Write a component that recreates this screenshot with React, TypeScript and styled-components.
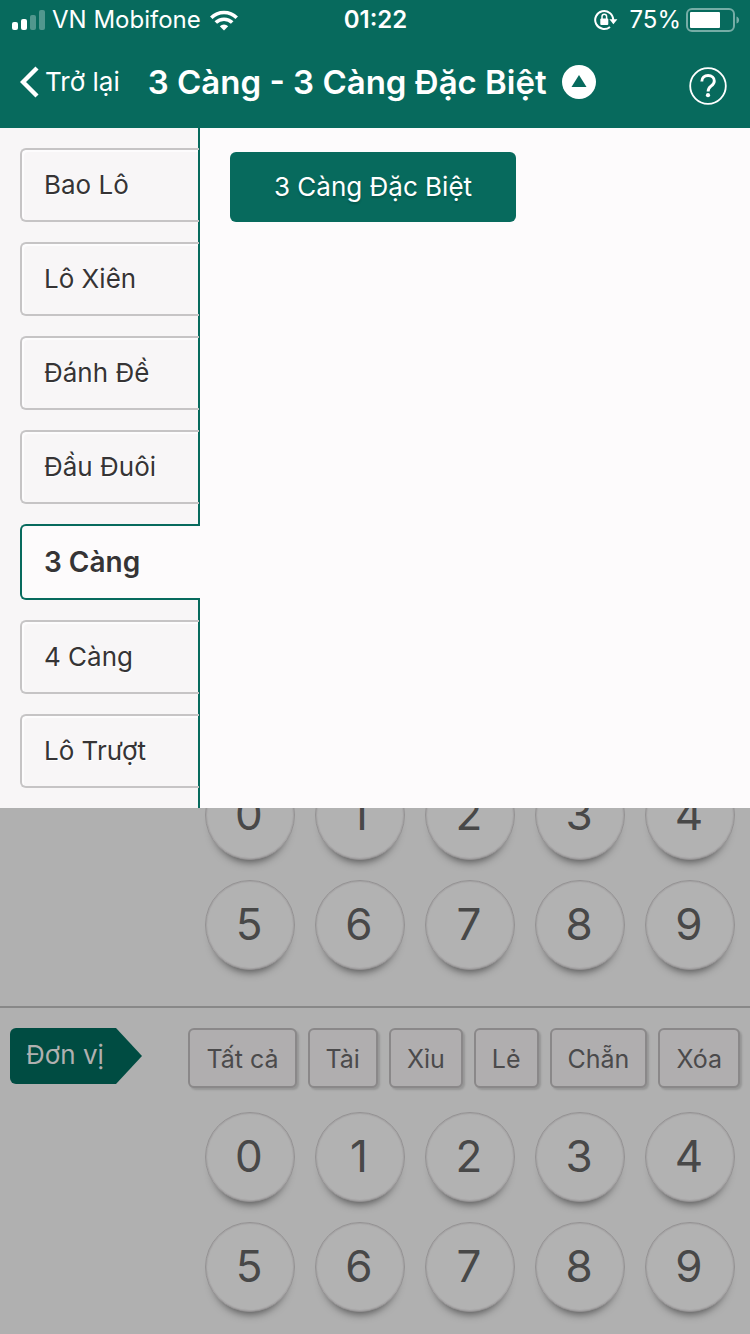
import React, { useState } from "react";
import styled, { createGlobalStyle } from "styled-components";

const green = "#076a5d";

const GlobalStyle = createGlobalStyle`
  *, *::before, *::after { box-sizing: border-box; }
  body {
    margin: 0;
    background: #b0b0b0;
    font-family: Inter, "Liberation Sans", sans-serif;
  }
  button { font-family: inherit; cursor: pointer; }
`;

const Page = styled.div`
  min-height: 100vh;
  display: flex;
  flex-direction: column;
`;

const Header = styled.header`
  background: ${green};
  color: #fff;
`;

const StatusBar = styled.div`
  display: grid;
  grid-template-columns: 1fr auto 1fr;
  align-items: center;
  height: 40px;
  padding: 0 10px 0 11px;
  font-size: 24px;
  line-height: 28px;
`;

const StatusGroup = styled.div<{ $end?: boolean }>`
  display: flex;
  align-items: center;
  justify-content: ${(p) => (p.$end ? "flex-end" : "flex-start")};
  gap: ${(p) => (p.$end ? 5 : 7)}px;
`;

const Carrier = styled.span`
  margin-right: 2px;
`;

const Clock = styled.time`
  font-weight: 600;
`;

const Charge = styled.span`
  margin-left: 6px;
`;

const NavBar = styled.nav`
  display: flex;
  align-items: center;
  height: 88px;
  padding: 0 23px 4px 20px;
`;

const BackLink = styled.a`
  display: flex;
  align-items: center;
  gap: 6px;
  color: #fff;
  font-size: 26px;
  line-height: 32px;
  text-decoration: none;
`;

const TitleButton = styled.button`
  display: flex;
  align-items: center;
  gap: 15px;
  margin-left: 28px;
  padding: 0;
  border: 0;
  background: none;
  color: #fff;
  font-size: 33px;
  line-height: 40px;
  font-weight: 600;
  white-space: nowrap;
`;

const HelpButton = styled.button`
  display: flex;
  margin: 8px 0 0 auto;
  padding: 0;
  border: 0;
  background: none;
`;

const Menu = styled.section`
  position: relative;
  z-index: 1;
  display: flex;
  background: #fdfbfc;
`;

const Sidebar = styled.div`
  flex: 0 0 200px;
  display: flex;
  flex-direction: column;
  gap: 20px;
  padding: 20px 0 20px 20px;
  background: #f8f6f7;
  box-shadow: inset -2px 0 ${green};
`;

const Tab = styled.button<{ $active: boolean }>`
  height: ${(p) => (p.$active ? 76 : 74)}px;
  margin-right: ${(p) => (p.$active ? 0 : 1)}px;
  padding: 0 0 0 22px;
  border: 2px solid ${(p) => (p.$active ? green : "#c6c4c5")};
  border-right: 0;
  border-radius: 6px 0 0 6px;
  background: ${(p) => (p.$active ? "#fdfbfc" : "#f8f6f7")};
  background-clip: padding-box;
  box-shadow: ${(p) => (p.$active ? "none" : `inset -1px 0 ${green}, inset 2px 2px #fdfcfd`)};
  color: #363435;
  font-size: ${(p) => (p.$active ? 28 : 26)}px;
  line-height: 32px;
  font-weight: ${(p) => (p.$active ? 600 : 400)};
  text-align: left;
  text-shadow: 1px 1px #fff;
`;

const Options = styled.div`
  flex: 1;
  display: flex;
  flex-wrap: wrap;
  align-content: flex-start;
  gap: 20px;
  padding: 24px 30px;
`;

const Option = styled.button`
  height: 70px;
  padding: 0 44px;
  border: 0;
  border-radius: 6px;
  background: ${green};
  color: #fff;
  font-size: 26px;
  line-height: 32px;
  text-shadow: 0 2px 2px rgba(0, 0, 0, 0.2);
`;

/* The board slides under the open menu, which hides the top of its first keys. */
const Board = styled.main`
  margin-top: -38px;
`;

const Position = styled.section`
  padding-bottom: 22px;

  & + & {
    border-top: 2px solid #888;
    margin-top: 14px;
    padding-top: 20px;
  }
`;

const PositionHead = styled.div`
  display: flex;
  justify-content: space-between;
  align-items: flex-start;
  padding: 0 10px;
  margin-bottom: 24px;
`;

const Label = styled.h2`
  display: flex;
  align-items: center;
  width: 132px;
  height: 56px;
  margin: 0;
  padding: 0 0 2px 16px;
  border-radius: 6px 0 0 6px;
  background: #004c42;
  clip-path: polygon(0 0, 106px 0, 100% 50%, 106px 100%, 0 100%);
  color: #b0b0b0;
  font-size: 26px;
  line-height: 32px;
  font-weight: 400;
`;

const QuickPicks = styled.div`
  display: flex;
  gap: 11px;
`;

const QuickPick = styled.button`
  height: 60px;
  padding: 2px 16px 0;
  border: 2px solid #8a8889;
  border-radius: 6px;
  background: #b0aeaf;
  box-shadow: 2px 2px 2px rgba(0, 0, 0, 0.15);
  color: #4b4a4b;
  font-size: 25px;
  line-height: 32px;
`;

const Keys = styled.div`
  display: grid;
  grid-template-columns: repeat(5, 90px);
  justify-content: end;
  gap: 20px;
  padding-right: 15px;
`;

const Key = styled.button`
  height: 90px;
  padding: 0 2px 2px 0;
  border: 1px solid #949293;
  border-radius: 50%;
  background: #b2b2b2;
  box-shadow: inset 0 0 1px 1px #a4a2a3, 0 10px 8px -8px rgba(0, 0, 0, 0.55);
  color: #484848;
  font-size: 44px;
  line-height: 52px;
`;

const tabs = ["Bao Lô", "Lô Xiên", "Đánh Đề", "Đầu Đuôi", "3 Càng", "4 Càng", "Lô Trượt"];
const quickPicks = ["Tất cả", "Tài", "Xỉu", "Lẻ", "Chẵn", "Xóa"];
const digits = [0, 1, 2, 3, 4, 5, 6, 7, 8, 9];

const SignalIcon = () => (
  <svg width="34" height="22" viewBox="0 0 34 22" fill="#fff" aria-hidden="true">
    <rect x="1" y="13" width="6" height="8" rx="2" />
    <rect x="10" y="10" width="6" height="11" rx="2" />
    <rect x="19" y="6" width="6" height="15" rx="2" opacity="0.3" />
    <rect x="28" y="1" width="6" height="20" rx="2" opacity="0.3" />
  </svg>
);

const WifiIcon = () => (
  <svg width="28" height="21" viewBox="0 0 28 21" fill="none" stroke="#fff" strokeWidth="3.6" aria-hidden="true">
    <path d="M1.3 7.8a18 18 0 0 1 25.4 0" />
    <path d="M5.8 12.6a11.6 11.6 0 0 1 16.4 0" />
    <path d="M14 20.5l-4.2-4.3a6 6 0 0 1 8.4 0z" fill="#fff" stroke="none" />
  </svg>
);

const RotationLockIcon = () => (
  <svg width="24" height="22" viewBox="0 0 24 22" fill="none" aria-hidden="true">
    <path d="M19.2 11A9 9 0 1 0 16 17.9" stroke="#fff" strokeWidth="2" />
    <path d="M15.4 10.2h8l-4 5z" fill="#fff" />
    <rect x="6.3" y="9.6" width="8" height="6.4" rx="1" fill="#fff" />
    <path d="M8 10V7.600a2.300 2.300 0 0 1 4.600 0V10" stroke="#fff" strokeWidth="1.500" />
  </svg>
);

const BatteryIcon = () => (
  <svg width="54" height="24" viewBox="0 0 54 24" fill="none" aria-hidden="true">
    <rect x="1" y="1" width="47" height="22" rx="5" stroke="#fff" strokeOpacity="0.45" strokeWidth="2" />
    <rect x="4" y="4" width="30" height="16" rx="1" fill="#fff" />
    <path d="M50.500 8.500c3.500 1 3.500 6 0 7z" fill="#fff" fillOpacity="0.45" />
  </svg>
);

const BackIcon = () => (
  <svg width="19" height="32" viewBox="0 0 19 32" fill="none" aria-hidden="true">
    <path d="M17 2L3 16l14 14" stroke="#fff" strokeWidth="4.400" />
  </svg>
);

const CollapseIcon = () => (
  <svg width="34" height="34" viewBox="0 0 34 34" aria-hidden="true">
    <circle cx="17" cy="17" r="17" fill="#fff" />
    <path d="M17 10l7.500 12h-15z" fill={green} />
  </svg>
);

const HelpIcon = () => (
  <svg width="38" height="38" viewBox="0 0 38 38" fill="none" stroke="#fff" aria-hidden="true">
    <circle cx="19" cy="19" r="17.800" strokeWidth="1.800" />
    <path d="M12.800 14.500c0-3.600 2.600-6 6.300-6s6.200 2.300 6.200 5.400c0 2.500-1.400 3.800-3.300 5.200-2.100 1.500-2.900 2.500-2.900 5.400" strokeWidth="2.900" />
    <circle cx="19" cy="28.200" r="2.100" fill="#fff" stroke="none" />
  </svg>
);

const DigitKeys = () => (
  <Keys>
    {digits.map((digit) => (
      <Key key={digit} type="button">
        {digit}
      </Key>
    ))}
  </Keys>
);

export default function App() {
  const [active, setActive] = useState("3 Càng");

  return (
    <Page>
      <GlobalStyle />
      <Header>
        <StatusBar>
          <StatusGroup>
            <SignalIcon />
            <Carrier>VN Mobifone</Carrier>
            <WifiIcon />
          </StatusGroup>
          <Clock>01:22</Clock>
          <StatusGroup $end>
            <RotationLockIcon />
            <Charge>75%</Charge>
            <BatteryIcon />
          </StatusGroup>
        </StatusBar>
        <NavBar>
          <BackLink href="#">
            <BackIcon />
            Trở lại
          </BackLink>
          <TitleButton type="button" aria-expanded="true">
            3 Càng - 3 Càng Đặc Biệt
            <CollapseIcon />
          </TitleButton>
          <HelpButton type="button" aria-label="Trợ giúp">
            <HelpIcon />
          </HelpButton>
        </NavBar>
      </Header>

      <Menu>
        <Sidebar>
          {tabs.map((tab) => (
            <Tab key={tab} type="button" $active={tab === active} onClick={() => setActive(tab)}>
              {tab}
            </Tab>
          ))}
        </Sidebar>
        <Options>
          <Option type="button">3 Càng Đặc Biệt</Option>
        </Options>
      </Menu>

      <Board>
        <Position>
          <DigitKeys />
        </Position>
        <Position>
          <PositionHead>
            <Label>Đơn vị</Label>
            <QuickPicks>
              {quickPicks.map((pick) => (
                <QuickPick key={pick} type="button">
                  {pick}
                </QuickPick>
              ))}
            </QuickPicks>
          </PositionHead>
          <DigitKeys />
        </Position>
      </Board>
    </Page>
  );
}
